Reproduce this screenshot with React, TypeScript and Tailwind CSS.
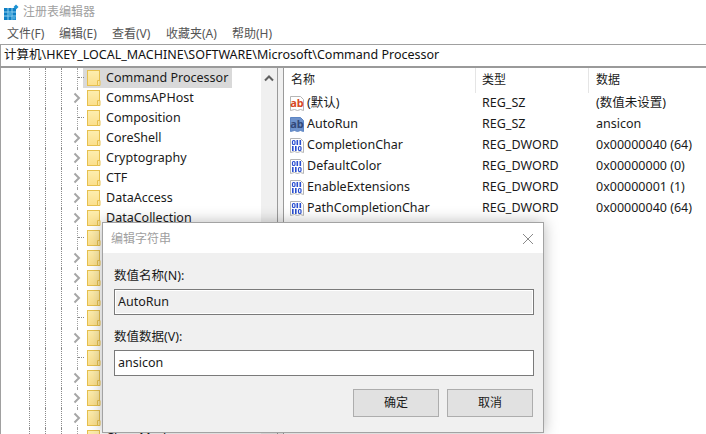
const font = "font-['Noto_Sans','Noto_Sans_CJK_SC',sans-serif]";

const menus = [
  { label: "文件(F)", w: "w-[52px]" },
  { label: "编辑(E)", w: "w-[53px]" },
  { label: "查看(V)", w: "w-[54px]" },
  { label: "收藏夹(A)", w: "w-[66px]" },
  { label: "帮助(H)", w: "w-[50px]" },
];

const keys: [string, boolean][] = [
  ["Command Processor", false],
  ["CommsAPHost", true],
  ["Composition", false],
  ["CoreShell", true],
  ["Cryptography", true],
  ["CTF", true],
  ["DataAccess", true],
  ["DataCollection", true],
  ["", false],
  ["", true],
  ["", true],
  ["", true],
  ["", false],
  ["", true],
  ["", false],
  ["", true],
  ["", true],
  ["", true],
  ["Class Mark", false],
];

const values = [
  { name: "(默认)", type: "REG_SZ", data: "(数值未设置)", icon: "ab" },
  { name: "AutoRun", type: "REG_SZ", data: "ansicon", icon: "sel" },
  { name: "CompletionChar", type: "REG_DWORD", data: "0x00000040 (64)", icon: "bin" },
  { name: "DefaultColor", type: "REG_DWORD", data: "0x00000000 (0)", icon: "bin" },
  { name: "EnableExtensions", type: "REG_DWORD", data: "0x00000001 (1)", icon: "bin" },
  { name: "PathCompletionChar", type: "REG_DWORD", data: "0x00000040 (64)", icon: "bin" },
];

const AppIcon = () => (
  <svg width="16" height="16" viewBox="0 0 16 16" className="shrink-0">
    <rect x="1" y="4" width="12" height="12" fill="#0f7fc4" />
    <path d="M5 4v12M9 4v12M1 8h12M1 12h12" stroke="#8fd0ee" strokeWidth="1" />
    <rect x="5.5" y="8.5" width="3" height="3" fill="#46a9dc" />
    <rect x="9.5" y="12.5" width="3" height="3" fill="#46a9dc" />
    <path d="M13 0.5l2.5 2.5-2.5 2.5-2.5-2.5z" fill="#1b92d4" />
  </svg>
);

const Folder = () => (
  <svg width="14" height="17" viewBox="0 0 14 17" className="shrink-0">
    <defs>
      <linearGradient id="fold" x1="0" y1="0" x2="0" y2="1">
        <stop offset="0" stopColor="#fdeeb0" />
        <stop offset="1" stopColor="#fbdf8c" />
      </linearGradient>
    </defs>
    <rect x="0.5" y="0.5" width="12" height="15" fill="url(#fold)" stroke="#e6c04e" />
    <path d="M10.5 15.5v-5h2.5v5z" fill="#fbe6a0" stroke="#e6c04e" />
  </svg>
);

const Chevron = () => (
  <svg width="8" height="12" viewBox="0 0 8 12">
    <path d="M1.5 1.5L6 6l-4.5 4.5" fill="none" stroke="#a6a6a6" strokeWidth="2" />
  </svg>
);

const ValueIcon = ({ kind }: { kind: string }) => {
  if (kind === "bin") {
    return (
      <svg width="16" height="17" viewBox="0 0 16 17" className="shrink-0">
        <path d="M1.5 1.5h10l3 3v11l-3-1-3 1-3-1-4 1z" fill="#fff" stroke="#b5b5b5" />
        <g fill="#2a4fd0">
          <rect x="3.5" y="3.5" width="2.5" height="4" rx="1" fill="none" stroke="#2a4fd0" strokeWidth="1.2" />
          <rect x="7.5" y="3" width="1.6" height="5" />
          <rect x="10.5" y="3" width="1.6" height="5" />
          <rect x="3" y="9" width="1.6" height="5" />
          <rect x="6" y="9" width="1.6" height="5" />
          <rect x="9.5" y="9.5" width="2.5" height="4" rx="1" fill="none" stroke="#2a4fd0" strokeWidth="1.2" />
        </g>
      </svg>
    );
  }
  const selected = kind === "sel";
  return (
    <svg width="16" height="17" viewBox="0 0 16 17" className="shrink-0">
      <path
        d="M1.5 1.5h10l3 3v11l-3-1-3 1-3-1-4 1z"
        fill={selected ? "#6f93cc" : "#fff"}
        stroke={selected ? "#5d86c4" : "#b5b5b5"}
      />
      <text
        x="8"
        y="11.5"
        textAnchor="middle"
        fontSize="11"
        fontWeight="700"
        fontFamily="Noto Sans"
        fill={selected ? "#33497a" : "#d8481f"}
      >
        ab
      </text>
    </svg>
  );
};

const KeyRow = ({ name, expandable, active }: { name: string; expandable: boolean; active: boolean }) => (
  <div className="flex h-5 shrink-0 items-stretch pl-[28px]">
    <div className="w-4 border-l border-dotted border-[#8a8a8a]" />
    <div className="w-4 border-l border-dotted border-[#8a8a8a]" />
    <div className="w-4 border-l border-dotted border-[#8a8a8a]" />
    <div className="relative w-[6px] border-l border-dotted border-[#a0a0a0]">
      {expandable ? (
        <span className="absolute top-[3px] left-[-5px] flex bg-white py-px">
          <Chevron />
        </span>
      ) : (
        <span className="absolute top-[9px] left-0 w-[6px] border-t border-dotted border-[#8a8a8a]" />
      )}
    </div>
    <div className={`flex w-[149px] items-center pl-1 ${active ? "bg-[#d9d9d9]" : ""}`}>
      <Folder />
      <span className="ml-[5px] text-[12.5px] whitespace-nowrap text-[#1a1a1a]">{name}</span>
    </div>
  </div>
);

const Field = ({ label, value, readOnly }: { label: string; value: string; readOnly?: boolean }) => (
  <div className="flex flex-col">
    <div className="flex h-[26px] items-center pt-[2px] text-[12.5px] text-[#1a1a1a]">{label}</div>
    <div
      className={`mt-[1px] flex h-[26px] items-center border border-[#7a7a7a] pl-[3px] text-[12.5px] text-[#1a1a1a] ${
        readOnly ? "bg-[#f0f0f0] shadow-[inset_0_0_0_1px_#fff]" : "bg-white"
      }`}
    >
      {value}
    </div>
  </div>
);

export default function App() {
  return (
    <div className={`relative flex h-[434px] w-[706px] flex-col overflow-hidden bg-white ${font}`}>
      <div className="flex h-[23px] shrink-0 items-center gap-[4px] pl-[3px] text-xs text-[#a0a0a0]">
        <AppIcon />
        <span>注册表编辑器</span>
      </div>
      <div className="flex h-[21px] shrink-0 items-center pl-[7px] text-xs text-[#555]">
        {menus.map((m) => (
          <span key={m.label} className={m.w}>
            {m.label}
          </span>
        ))}
      </div>
      <div className="flex h-[22px] shrink-0 items-center border-t border-l border-[#a0a0a0] pl-[3px] text-[12.5px] text-[#111]">
        计算机\HKEY_LOCAL_MACHINE\SOFTWARE\Microsoft\Command Processor
      </div>
      <div className="h-[2px] shrink-0 bg-[#9a9a9a]" />
      <div className="flex min-h-0 flex-1">
        <div className="flex w-[261px] shrink-0 flex-col overflow-hidden border-l border-[#a0a0a0]">
          {keys.map(([name, expandable], i) => (
            <KeyRow key={i} name={name} expandable={expandable} active={i === 0} />
          ))}
        </div>
        <div className="flex w-4 shrink-0 justify-center bg-[#f0f0f0] pt-[7px]">
          <svg width="10" height="7" viewBox="0 0 10 7">
            <path d="M1 5.5L5 1.5l4 4" fill="none" stroke="#606060" strokeWidth="2" />
          </svg>
        </div>
        <div className="w-[7px] shrink-0 border-x border-[#9a9a9a] bg-[#f0f0f0]" />
        <div className="min-w-0 flex-1">
          <div className="flex h-[25px] items-center text-xs text-[#1a1a1a]">
            <div className="h-full w-[192px] border-r border-[#e5e5e5] pt-[4px] pl-[7px]">名称</div>
            <div className="h-full w-[113px] border-r border-[#e5e5e5] pt-[4px] pl-[6px]">类型</div>
            <div className="h-full pt-[4px] pl-[7px]">数据</div>
          </div>
          {values.map((v) => (
            <div key={v.name} className="flex h-[21px] items-center text-[12.5px] text-[#1a1a1a]">
              <div className="flex w-[192px] items-center pl-[5px]">
                <ValueIcon kind={v.icon} />
                <span className="ml-[2px] whitespace-nowrap">{v.name}</span>
              </div>
              <div className="w-[113px] pl-[6px]">{v.type}</div>
              <div className="pl-[7px] whitespace-nowrap">{v.data}</div>
            </div>
          ))}
        </div>
      </div>

      <div className="absolute top-[222px] left-[102px] flex h-[211px] w-[442px] flex-col border border-[#a3a3a3] bg-[#f0f0f0] shadow-[0_0_14px_rgba(0,0,0,0.28)]">
        <div className="flex h-[30px] shrink-0 items-center justify-between bg-white pt-[2px] pr-[9px] pl-2 text-xs text-[#a0a0a0]">
          <span>编辑字符串</span>
          <svg width="12" height="12" viewBox="0 0 12 12">
            <path d="M1 1l10 10M11 1L1 11" stroke="#8a8a8a" strokeWidth="1" />
          </svg>
        </div>
        <div className="flex flex-col gap-[8px] pt-[9px] pr-[9px] pl-[11px]">
          <Field label="数值名称(N):" value="AutoRun" readOnly />
          <Field label="数值数据(V):" value="ansicon" />
        </div>
        <div className="mt-[13px] flex justify-end gap-2 pr-[10px]">
          <button className="h-[28px] w-[86px] border border-[#adadad] bg-[#e1e1e1] text-xs text-[#1a1a1a]">确定</button>
          <button className="h-[28px] w-[86px] border border-[#adadad] bg-[#e1e1e1] text-xs text-[#1a1a1a]">取消</button>
        </div>
      </div>
    </div>
  );
}
